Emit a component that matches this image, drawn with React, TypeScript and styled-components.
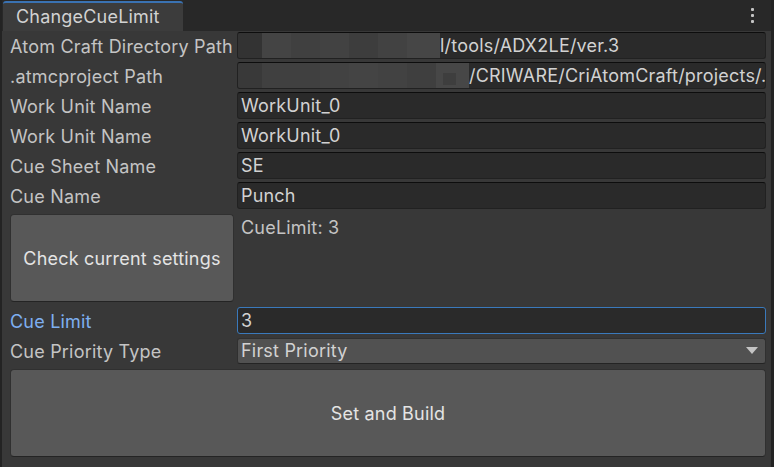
import React from "react";
import styled, { createGlobalStyle } from "styled-components";

const GlobalStyle = createGlobalStyle`
  html, body {
    margin: 0;
    padding: 0;
    background: #383838;
  }
  body {
    font-family: Inter, "Noto Sans", sans-serif;
    letter-spacing: 0.2px;
  }
`;

const Window = styled.div`
  width: 774px;
  height: 467px;
  box-sizing: border-box;
  background: #383838;
  border-left: 2px solid #232323;
  border-right: 3px solid #232323;
  display: flex;
  flex-direction: column;
  overflow: hidden;
`;

const TabBar = styled.div`
  height: 31px;
  flex: none;
  background: #282828;
  display: flex;
  align-items: stretch;
  padding-left: 1px;
  padding-top: 1px;
  box-sizing: border-box;
`;

const Tab = styled.div`
  width: 180px;
  background: #3c3c3c;
  border-top: 2px solid #3a72b2;
  border-radius: 3px 3px 0 0;
  color: #d2d2d2;
  font-size: 18px;
  line-height: 27px;
  padding-left: 13px;
  box-sizing: border-box;
`;

const Spacer = styled.div`
  flex: 1;
`;

const Kebab = styled.div`
  width: 20px;
  display: flex;
  flex-direction: column;
  align-items: center;
  gap: 3px;
  padding-top: 7px;
  margin-right: 9px;

  span {
    width: 3px;
    height: 3px;
    background: #c4c4c4;
    border-radius: 1px;
  }
`;

const Content = styled.div`
  flex: 1;
  padding: 0 5px 0 8px;
  display: flex;
  flex-direction: column;
`;

const Row = styled.div<{ $top?: number }>`
  display: grid;
  grid-template-columns: 227px 1fr;
  height: 27px;
  margin-top: ${(p) => p.$top ?? 3}px;
  align-items: center;
`;

const Label = styled.div<{ $focused?: boolean }>`
  color: ${(p) => (p.$focused ? "#7eaff0" : "#c4c4c4")};
  font-size: 18px;
  white-space: nowrap;
  overflow: hidden;
  line-height: 27px;
  padding-top: 1px;
`;

const Field = styled.div<{ $focused?: boolean }>`
  height: 27px;
  box-sizing: border-box;
  background: #2a2a2a;
  border: 1px solid ${(p) => (p.$focused ? "#3a79bb" : "#212121")};
  border-top-color: ${(p) => (p.$focused ? "#3a79bb" : "#0d0d0d")};
  border-radius: 3px;
  color: #d2d2d2;
  font-size: 18px;
  line-height: 25px;
  padding-left: 3px;
  white-space: nowrap;
  overflow: hidden;
  display: flex;
  align-items: center;
`;

const MaskedField = styled(Field)`
  padding-left: 0;
  align-items: stretch;
`;

const Mosaic = styled.div`
  display: flex;
  flex: none;
  margin: -1px 0 -1px -1px;
`;

const Block = styled.div<{ $w: number; $c: string }>`
  width: ${(p) => p.$w}px;
  background: ${(p) => p.$c};
  position: relative;
`;

const Speck = styled.div`
  position: absolute;
  left: 7px;
  top: 11px;
  width: 13px;
  height: 12px;
  background: #3e3e3e;
`;

const FieldText = styled.span`
  line-height: 25px;
`;

const Dropdown = styled.div`
  height: 26px;
  box-sizing: border-box;
  background: #515151;
  border: 1px solid #303030;
  border-bottom-color: #242424;
  border-radius: 3px;
  color: #d2d2d2;
  font-size: 18px;
  line-height: 24px;
  padding-left: 3px;
  display: flex;
  align-items: center;
  justify-content: space-between;
`;

const Arrow = styled.svg`
  margin-right: 7px;
`;

const ButtonRow = styled.div`
  display: grid;
  grid-template-columns: 224px 1fr;
  gap: 7px;
  margin-top: 5px;
`;

const Button = styled.div<{ $h: number }>`
  height: ${(p) => p.$h}px;
  box-sizing: border-box;
  background: #585858;
  border: 1px solid #303030;
  border-bottom-color: #242424;
  border-radius: 4px;
  color: #e4e4e4;
  font-size: 18px;
  display: flex;
  align-items: center;
  justify-content: center;
`;

const Info = styled.div`
  color: #c4c4c4;
  font-size: 18px;
  line-height: 27px;
`;

const BigButton = styled(Button)`
  margin-top: 5px;
`;

const mosaic1: [number, string][] = [
  [25, "#333333"],
  [29, "#444444"],
  [29, "#404040"],
  [29, "#424242"],
  [29, "#3d3d3d"],
  [29, "#424242"],
  [33, "#464646"],
];

const mosaic2: [number, string][] = [
  [25, "#393939"],
  [29, "#404040"],
  [29, "#404040"],
  [29, "#424242"],
  [29, "#444444"],
  [29, "#424242"],
  [29, "#3f3f3f"],
  [33, "#474747"],
];

function MosaicStrip({ blocks, speck }: { blocks: [number, string][]; speck?: boolean }) {
  return (
    <Mosaic>
      {blocks.map(([w, c], i) => (
        <Block key={i} $w={w} $c={c}>
          {speck && i === blocks.length - 1 && <Speck />}
        </Block>
      ))}
    </Mosaic>
  );
}

export default function App() {
  return (
    <>
      <GlobalStyle />
      <Window>
        <TabBar>
          <Tab>ChangeCueLimit</Tab>
          <Spacer />
          <Kebab>
            <span />
            <span />
            <span />
          </Kebab>
        </TabBar>
        <Content>
          <Row $top={1}>
            <Label>Atom Craft Directory Path</Label>
            <MaskedField>
              <MosaicStrip blocks={mosaic1} />
              <FieldText>l/tools/ADX2LE/ver.3</FieldText>
            </MaskedField>
          </Row>
          <Row>
            <Label>.atmcproject Path</Label>
            <MaskedField>
              <MosaicStrip blocks={mosaic2} speck />
              <FieldText>/CRIWARE/CriAtomCraft/projects/.</FieldText>
            </MaskedField>
          </Row>
          <Row>
            <Label>Work Unit Name</Label>
            <Field>WorkUnit_0</Field>
          </Row>
          <Row>
            <Label>Work Unit Name</Label>
            <Field>WorkUnit_0</Field>
          </Row>
          <Row>
            <Label>Cue Sheet Name</Label>
            <Field>SE</Field>
          </Row>
          <Row>
            <Label>Cue Name</Label>
            <Field>Punch</Field>
          </Row>
          <ButtonRow>
            <Button $h={88}>Check current settings</Button>
            <Info>CueLimit: 3</Info>
          </ButtonRow>
          <Row $top={5}>
            <Label $focused>Cue Limit</Label>
            <Field $focused>3</Field>
          </Row>
          <Row $top={3}>
            <Label>Cue Priority Type</Label>
            <Dropdown>
              <span>First Priority</span>
              <Arrow width="12" height="7" viewBox="0 0 12 7">
                <path d="M0 0 H12 L6 7 Z" fill="#c4c4c4" />
              </Arrow>
            </Dropdown>
          </Row>
          <BigButton $h={88}>Set and Build</BigButton>
        </Content>
      </Window>
    </>
  );
}
